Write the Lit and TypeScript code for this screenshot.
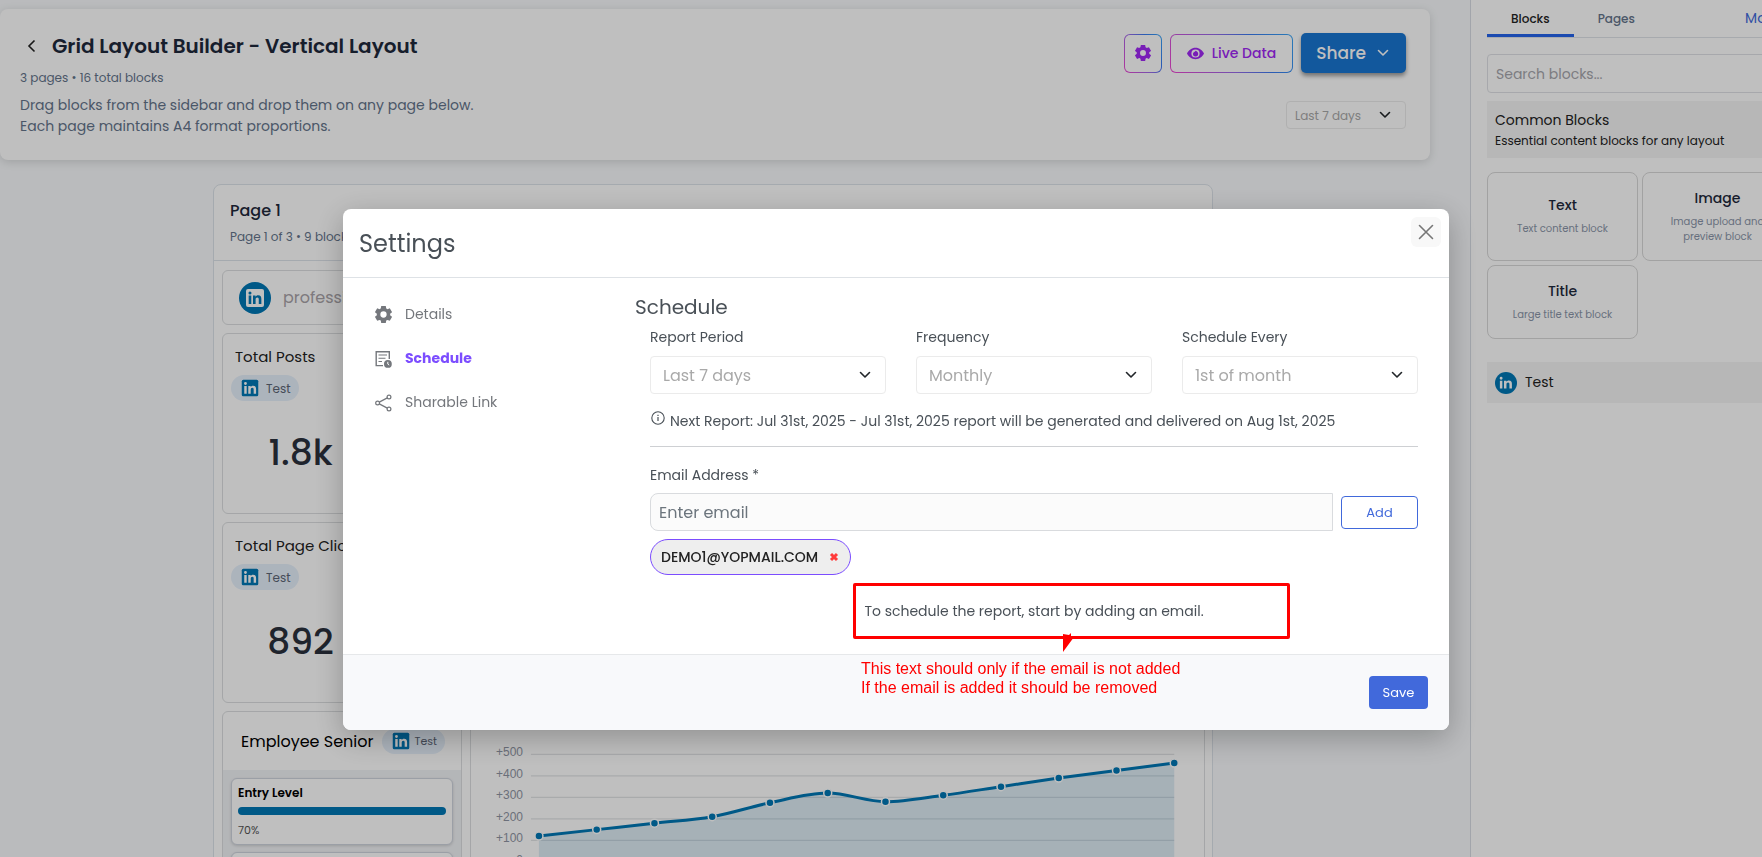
import { LitElement, html, css, svg } from "lit";
import { customElement } from "lit/decorators.js";

const chevron = (size = 16) => html`<svg class="chev" width=${size} height=${size} viewBox="0 0 16 16" aria-hidden="true"><path d="M3.5 5.5 8 10l4.5-4.5" fill="none" stroke="currentColor" stroke-width="1.6" stroke-linecap="round" stroke-linejoin="round"/></svg>`;

const gear = (size: number) => html`<svg width=${size} height=${size} viewBox="2 2 20 20" fill="currentColor" aria-hidden="true"><path fill-rule="evenodd" d="M9.3 2h5.4l.5 2.9c.5.2 1 .5 1.5.8l2.7-1 2.7 4.6-2.3 1.9a7 7 0 0 1 0 1.7l2.3 1.9-2.7 4.6-2.7-1c-.5.3-1 .6-1.5.8L14.7 22H9.3l-.5-2.8c-.5-.2-1-.5-1.5-.8l-2.7 1-2.7-4.6 2.3-1.9a7 7 0 0 1 0-1.7L1.9 9.3l2.7-4.6 2.7 1c.5-.3 1-.6 1.5-.8zM12 8.3a3.7 3.7 0 1 0 0 7.4 3.7 3.7 0 0 0 0-7.4z"/></svg>`;

const IN_GLYPH = "M5.3 9.3h2.9v9.3H5.3zM6.75 4.7a1.7 1.7 0 1 1 0 3.4 1.7 1.7 0 0 1 0-3.4zM10.1 9.3h2.8v1.3c.5-.9 1.5-1.6 3-1.6 2.7 0 3.5 1.7 3.5 4.2v5.4h-2.9v-4.9c0-1.3-.3-2.2-1.6-2.2s-1.9 1-1.9 2.3v4.8h-2.9z";
const linkedSquare = html`<svg width="18" height="18" viewBox="0 0 24 24" aria-hidden="true"><rect x="1" y="1" width="22" height="22" rx="2" fill="#0077b5"/><path d=${IN_GLYPH} transform="translate(-1.6 -1.2) scale(1.12)" fill="#fff"/></svg>`;
const linkedRound = html`<svg width="22" height="22" viewBox="0 0 24 24" aria-hidden="true"><circle cx="12" cy="12" r="12" fill="#0077b5"/><path d=${IN_GLYPH} transform="translate(.4 .8) scale(.93)" fill="#fff"/></svg>`;
const linkedLarge = html`<svg width="32" height="32" viewBox="0 0 32 32" aria-hidden="true"><circle cx="16" cy="16" r="16" fill="#0077b5"/><rect x="7" y="7" width="18" height="18" rx="2" fill="#fff"/><path d=${IN_GLYPH} transform="translate(4.9 5.2) scale(.9)" fill="#0077b5"/></svg>`;

const badge = html`<span class="badge">${linkedSquare}<span>Test</span></span>`;

const FOLLOWERS = [120, 150, 180, 210, 275, 320, 280, 310, 350, 390, 425, 460];

@customElement("growth-chart")
class GrowthChart extends LitElement {
  static styles = css`
    :host { display: block; }
    svg { display: block; width: 100%; }
    text { font: 12px "Liberation Sans", Arial, sans-serif; fill: #8f95a3; text-anchor: end; }
  `;
  render() {
    const left = 68;
    const right = 704;
    const y = (v: number) => 150 - v * 0.215;
    const pts = FOLLOWERS.map((v, i) => [left + (i * (right - left)) / (FOLLOWERS.length - 1), y(v)]);
    const slope = (i: number) => {
      const a = pts[i][1] - pts[i - 1][1];
      const b = pts[i + 1][1] - pts[i][1];
      return a * b <= 0 ? 0 : (a + b) / (pts[i + 1][0] - pts[i - 1][0]);
    };
    let line = `M${pts[0][0]} ${pts[0][1]}`;
    for (let i = 1; i < pts.length; i++) {
      const [x0, y0] = pts[i - 1];
      const [x1, y1] = pts[i];
      const d = (x1 - x0) / 3;
      const s0 = i === 1 ? (y1 - y0) / (x1 - x0) : slope(i - 1);
      const s1 = i === pts.length - 1 ? (y1 - y0) / (x1 - x0) : slope(i);
      line += `C${x0 + d} ${y0 + d * s0} ${x1 - d} ${y1 - d * s1} ${x1} ${y1}`;
    }
    return html`<svg viewBox="0 0 734 190" role="img" aria-label="Followers over time">
      ${[500, 400, 300, 200, 100, 0].map((v) => svg`
        <line x1="60" x2="704" y1=${y(v)} y2=${y(v)} stroke="#e2e4e6" stroke-width="1.2"/>
        <text x="52" y=${y(v) + 2}>${v ? "+" + v : "0"}</text>`)}
      <path d="${line}L${right} ${y(0)}L${left} ${y(0)}Z" fill="#0077b5" fill-opacity=".13"/>
      <path d=${line} fill="none" stroke="#0077b5" stroke-width="3"/>
      ${pts.map(([cx, cy]) => svg`<circle cx=${cx} cy=${cy} r="4" fill="#0077b5" stroke="#fff" stroke-width="1.5"/>`)}
    </svg>`;
  }
}

@customElement("app-root")
class AppRoot extends LitElement {
  static styles = css`
    :host { display: block; font-family: Poppins, Inter, sans-serif; color: #1e293b; font-size: 14px; line-height: 21px; }
    * { box-sizing: border-box; }
    h1, h2, h3, p { margin: 0; font-weight: 400; font-size: inherit; }
    button, input, select { font: inherit; color: inherit; margin: 0; }
    button { background: none; border: 0; padding: 0; cursor: pointer; }
    svg { display: block; flex: none; }
    a { text-decoration: none; color: inherit; }

    .shell { display: flex; height: 100vh; overflow: hidden; background: #f8fafc; }
    main { flex: 1; min-width: 0; padding: 9px 40px 0 0; }
    .hero { display: flex; justify-content: space-between; background: #fff; border-radius: 8px; padding: 24px 24px 23px 20px; box-shadow: 0 2px 10px rgba(0, 0, 0, .14); }
    .title { display: flex; align-items: center; gap: 14px; padding-left: 4px; }
    .title h1 { font-size: 20px; line-height: 26px; font-weight: 600; }
    .back { color: #222; }
    .counts { font-size: 12px; line-height: 18px; color: #64748b; margin: 10px 0 8px; }
    .intro { color: #64748b; }
    .tools { display: flex; flex-direction: column; align-items: flex-end; gap: 28px; }
    .row { display: flex; align-items: center; gap: 8px; }
    .ring { display: flex; align-items: center; justify-content: center; gap: 8px; height: 39px; border: 1px solid transparent; border-radius: 6px; color: #a028f5; font-weight: 500;
      background: linear-gradient(#fff, #fff) padding-box, linear-gradient(60deg, #f046d2, #9b6bea 45%, #3a7bf0 70%, #38a5f5) border-box; }
    .gearbtn { width: 38px; }
    .live { padding: 0 16px; }
    .share { display: flex; align-items: center; gap: 9px; height: 40px; padding: 0 15px; background: #1976d2; color: #fff; border-radius: 5px; font-size: 17px; font-weight: 500; box-shadow: 0 3px 4px rgba(0, 0, 0, .4); }

    .pick { display: grid; align-items: center; }
    .pick select, .pick svg { grid-area: 1 / 1; }
    .pick svg { justify-self: end; margin-right: 13px; pointer-events: none; color: #212529; }
    .pick select { appearance: none; width: 100%; height: 38px; border: 1px solid #ebebeb; border-radius: 4px; background: #fff; color: #a9a9a9; font-size: 16px; padding: 0 12px; outline: 0; }
    .pick.small { width: 120px; }
    .pick.small select { height: 28px; font-size: 12px; padding: 0 8px; }

    .desk { padding-right: 4px; }
    .paper { max-width: 1000px; margin: 24px auto 0; border: 1px solid #dde3ea; border-radius: 8px; background: #fff; }
    .paperhead { padding: 14px 16px; border-bottom: 1px solid #dde3ea; }
    .paperhead h2 { font-size: 16px; line-height: 24px; font-weight: 500; }
    .paperhead p { font-size: 12px; line-height: 18px; color: #64748b; margin-top: 5px; }
    .blocks { display: grid; grid-template-columns: repeat(12, minmax(0, 1fr)); gap: 8px; padding: 9px 7px 8px 8px; }
    .card { border: 1px solid #dcdee0; border-radius: 6px; background: #fff; overflow: hidden; }
    .full { grid-column: span 12; display: flex; align-items: center; gap: 12px; height: 55px; padding: 0 16px; font-size: 16px; color: #a8a3a8; }
    .metric { grid-column: 1 / span 2; height: 181px; padding: 12px 8px; white-space: nowrap; }
    .metric h3 { padding-left: 4px; font-size: 15px; line-height: 22px; color: #222; }
    .badge { display: inline-flex; align-items: center; gap: 7px; height: 26px; padding: 0 8px 0 10px; border-radius: 13px; background: #e6f0fb; font-size: 12px; color: #5c6676; }
    .metric .badge { margin-top: 7px; }
    .metric strong { display: block; text-align: center; font-size: 36px; line-height: 54px; font-weight: 500; margin-top: 23px; color: #2a303c; }
    .levels { grid-column: 1 / span 3; height: 220px; }
    .levelhead { display: flex; align-items: center; justify-content: space-between; gap: 8px; height: 58px; padding: 0 16px 0 18px; font-size: 16px; color: #000; white-space: nowrap; }
    .levelhead .badge { font-size: 11px; height: 25px; gap: 5px; }
    .levellist { display: flex; flex-direction: column; gap: 7px; padding: 8px; background: #f1f3f6; }
    .level { height: 67px; padding: 6px; border: 1px solid #cfd4de; border-radius: 6px; background: #fff; box-shadow: 0 1px 3px rgba(0, 0, 0, .15); }
    .level b { display: block; font-size: 12px; line-height: 16px; font-weight: 600; color: #000; }
    .track { height: 8px; margin: 6px 0 7px; border-radius: 4px; background: #0077b5; }
    .level small { display: block; font-size: 11px; line-height: 16px; color: #555; }
    .growth { grid-column: span 9; height: 220px; }

    aside { flex: 0 0 292px; border-left: 1px solid #d8dde5; background: #fff; overflow: hidden; }
    .side { width: 338px; padding: 0 17px 0 16px; }
    .tabs { display: flex; height: 38px; border-bottom: 1px solid #dfe3e9; font-size: 12px; font-weight: 500; color: #64748b; }
    .tabs button { padding: 3px 24px 0; border-bottom: 3px solid transparent; }
    .tabs .on { color: #222; border-color: #2563eb; }
    .tabs .more { margin-left: auto; padding: 3px 12px 0 0; font-size: 14px; color: #4169db; font-weight: 400; }
    .search { display: block; width: 100%; height: 39px; margin: 16px 0 8px; border: 1px solid #dfe1e6; border-radius: 4px; padding: 2px 8px 0; background: #fff; outline: 0; }
    .search::placeholder { color: #a6a6ac; opacity: 1; }
    .group { background: #f4f4f4; padding: 9px 8px 7px; color: #222; height: 57px; }
    .group p { font-size: 12px; line-height: 20px; }
    .tiles { display: grid; grid-template-columns: 151px 151px; gap: 4px; margin: 14px 0 23px; }
    .tile { display: flex; flex-direction: column; align-items: center; justify-content: center; gap: 5px; min-height: 74px; padding: 9px 20px 11px; border: 1px solid #d8d8d8; border-radius: 8px; background: #fff; font-weight: 500; text-align: center; }
    .tile small { font-size: 10px; line-height: 15px; font-weight: 400; color: #8a95a8; }
    .tile.tall { min-height: 89px; }
    .source { display: flex; align-items: center; gap: 8px; height: 41px; padding: 0 8px; background: #f4f4f4; color: #222; }

    .veil { position: fixed; inset: 0; display: flex; justify-content: center; align-items: flex-start; padding: 209px 0 0 30px; background: rgba(0, 0, 0, .25); }
    .modal { width: 1106px; max-width: 96vw; background: #fff; border-radius: 8px; overflow: hidden; color: #495057; box-shadow: 0 8px 30px rgba(0, 0, 0, .25); }
    .modalhead { display: flex; justify-content: space-between; height: 69px; padding: 8px 8px 0 16px; border-bottom: 1px solid #dee2e6; }
    .modalhead h2 { font-size: 24px; line-height: 54px; }
    .close { display: grid; place-items: center; width: 30px; height: 30px; border-radius: 6px; background: #f8f8f8; color: #777; }
    .modalbody { display: grid; grid-template-columns: 292px minmax(0, 1fr); padding: 14px 31px 0 0; }
    nav { display: flex; flex-direction: column; gap: 23px; padding: 12px 0 0 32px; }
    nav a { display: flex; align-items: center; gap: 13px; color: #74777c; }
    nav a.on span { color: #7c4dff; font-weight: 700; }
    .pane h3 { font-size: 20px; line-height: 30px; }
    .form { padding-left: 15px; }
    .picks { display: grid; grid-template-columns: repeat(3, 1fr); gap: 30px; }
    label { display: block; }
    .picks label { margin: 5px 0 8px; }
    .next { display: flex; gap: 4px; height: 53px; padding-top: 17px; border-bottom: 1px solid #ced0d3; }
    .email { margin: 18px 0 7px; }
    .entry input { flex: 1; min-width: 0; height: 38px; border: 1px solid #d9dbde; border-radius: 8px 0 0 8px; background: #fbfbfb; padding: 0 8px; font-size: 16px; outline: 0; }
    .entry input::placeholder { color: #6c757d; opacity: 1; }
    .add { width: 77px; height: 33px; border: 1px solid #4169db; border-radius: 4px; color: #4169db; font-size: 13px; }
    .chip { display: inline-flex; align-items: center; gap: 11px; height: 36px; margin-top: 8px; padding: 0 11px 0 10px; border: 1px solid #7c4dff; border-radius: 18px; background: #eee; color: #222; font-weight: 500; }
    .chip button { color: #ff3b3b; display: grid; }
    .hint { padding: 26px 0 32px; text-align: center; }
    .modalfoot { display: flex; justify-content: flex-end; align-items: flex-start; height: 76px; padding: 21px; border-top: 1px solid #e6e8ea; background: #f8f9fb; }
    .save { width: 59px; height: 33px; border-radius: 4px; background: #4169db; color: #fff; font-size: 13px; }

    .note { position: absolute; left: 853px; top: 583px; width: 437px; color: #f00; font: 16px/19px "Liberation Sans", Arial, sans-serif; }
    .frame { height: 56px; border: 3px solid #f00; border-radius: 2px; }
    .tail { margin: -6px 0 0 210px; }
    .note p { padding: 7px 0 0 8px; white-space: nowrap; }
  `;

  pick(id: string, value: string, small = false) {
    return html`<div class="pick ${small ? "small" : ""}"><select id=${id} aria-label=${id}><option>${value}</option></select>${chevron()}</div>`;
  }

  render() {
    return html`
      <div class="shell">
        <main>
          <section class="hero">
            <div>
              <div class="title">
                <button class="back" aria-label="Back"><svg width="14" height="16" viewBox="0 0 14 16"><path d="M10.5 2.5 5 8l5.5 5.5" fill="none" stroke="currentColor" stroke-width="1.6"/></svg></button>
                <h1>Grid Layout Builder - Vertical Layout</h1>
              </div>
              <p class="counts">3 pages • 16 total blocks</p>
              <p class="intro">Drag blocks from the sidebar and drop them on any page below.<br />Each page maintains A4 format proportions.</p>
            </div>
            <div class="tools">
              <div class="row">
                <button class="ring gearbtn" aria-label="Settings">${gear(16)}</button>
                <button class="ring live">
                  <svg width="17" height="17" viewBox="0 0 24 24" fill="currentColor"><path fill-rule="evenodd" d="M12 4C6.5 4 2.3 7.5 0 12c2.3 4.5 6.5 8 12 8s9.7-3.5 12-8c-2.3-4.5-6.5-8-12-8zm0 2.2a5.8 5.8 0 1 1 0 11.6 5.8 5.8 0 0 1 0-11.6z"/><path d="M12 8.2c-.2 1.7-3.6 1.6-3.6 4.3a3.7 3.7 0 0 0 7.4 0c0-1.8-1.3-3.9-3.8-4.3z"/></svg>
                  Live Data
                </button>
                <button class="share">Share ${chevron(16)}</button>
              </div>
              ${this.pick("range", "Last 7 days", true)}
            </div>
          </section>
          <div class="desk">
            <section class="paper">
              <header class="paperhead"><h2>Page 1</h2><p>Page 1 of 3 • 9 blocks</p></header>
              <div class="blocks">
                <div class="card full">${linkedLarge}<span>professional</span></div>
                <div class="card metric"><h3>Total Posts</h3>${badge}<strong>1.8k</strong></div>
                <div class="card metric"><h3>Total Page Clicks</h3>${badge}<strong>892</strong></div>
                <div class="card levels">
                  <div class="levelhead"><span>Employee Senior</span>${badge}</div>
                  <div class="levellist">
                    <div class="level"><b>Entry Level</b><div class="track"></div><small>70%</small></div>
                    <div class="level"></div>
                  </div>
                </div>
                <div class="card growth"><growth-chart></growth-chart></div>
              </div>
            </section>
          </div>
        </main>
        <aside>
          <div class="side">
            <div class="tabs"><button class="on">Blocks</button><button>Pages</button><button class="more">More</button></div>
            <input class="search" type="search" placeholder="Search blocks..." aria-label="Search blocks" />
            <div class="group"><h3>Common Blocks</h3><p>Essential content blocks for any layout</p></div>
            <div class="tiles">
              <button class="tile tall">Text<small>Text content block</small></button>
              <button class="tile tall">Image<small>Image upload and preview block</small></button>
              <button class="tile">Title<small>Large title text block</small></button>
            </div>
            <div class="source">${linkedRound}<span>Test</span></div>
          </div>
        </aside>
      </div>

      <div class="veil">
        <div class="modal" role="dialog" aria-labelledby="settings-title">
          <header class="modalhead">
            <h2 id="settings-title">Settings</h2>
            <button class="close" aria-label="Close"><svg width="16" height="16" viewBox="0 0 16 16"><path d="M1.5 1.5l13 13M14.5 1.5l-13 13" stroke="currentColor" stroke-width="1.6" stroke-linecap="round"/></svg></button>
          </header>
          <div class="modalbody">
            <nav>
              <a href="#details">${gear(17)}<span>Details</span></a>
              <a class="on" href="#schedule"><svg width="17" height="18" viewBox="0 0 17 18" fill="none" stroke="currentColor" stroke-width="1.4"><path d="M8 15.6H1.2V1.7h13.1V9"/><path d="M3.5 5H12M3.5 8.3h7M3.5 11.5H7" stroke-width="1.1"/><circle cx="12.9" cy="13.9" r="3.9" fill="currentColor" stroke="none"/><path d="M12.8 11.8v2.3l1.4 1" stroke="#fff" stroke-width="1"/></svg><span>Schedule</span></a>
              <a href="#link"><svg width="17" height="18" viewBox="0 0 17 18" fill="none" stroke="currentColor" stroke-width="1.2"><circle cx="2.6" cy="9" r="1.9"/><circle cx="14" cy="3" r="1.9"/><circle cx="14" cy="15" r="1.9"/><path d="M4.3 8.1l8-4.2M4.3 9.9l8 4.2"/></svg><span>Sharable Link</span></a>
            </nav>
            <section class="pane">
              <h3>Schedule</h3>
              <div class="form">
                <div class="picks">
                  <div><label for="period">Report Period</label>${this.pick("period", "Last 7 days")}</div>
                  <div><label for="frequency">Frequency</label>${this.pick("frequency", "Monthly")}</div>
                  <div><label for="every">Schedule Every</label>${this.pick("every", "1st of month")}</div>
                </div>
                <div class="next">
                  <svg width="16" height="16" viewBox="0 0 16 16"><circle cx="8" cy="7" r="6.2" fill="none" stroke="currentColor" stroke-width="1.1"/><path d="M8 6.1v4M8 3.8v1.2" stroke="currentColor" stroke-width="1.2"/></svg>
                  <p>Next Report: Jul 31st, 2025 - Jul 31st, 2025 report will be generated and delivered on Aug 1st, 2025</p>
                </div>
                <label class="email" for="email">Email Address *</label>
                <div class="row entry"><input id="email" type="email" placeholder="Enter email" /><button class="add">Add</button></div>
                <div class="chip"><span>DEMO1@YOPMAIL.COM</span><button aria-label="Remove email"><svg width="10" height="10" viewBox="0 0 10 10"><path d="M2 2l6 6M8 2L2 8" stroke="currentColor" stroke-width="3"/></svg></button></div>
                <p class="hint">To schedule the report, start by adding an email.</p>
              </div>
            </section>
          </div>
          <footer class="modalfoot"><button class="save">Save</button></footer>
        </div>
        <div class="note">
          <div class="frame"></div>
          <svg class="tail" width="12" height="19" viewBox="0 0 12 19"><path d="M0 1l6 1 2-2v4h3L0 19z" fill="#f00"/></svg>
          <p>This text should only if the email is not added<br />If the email is added it should be removed</p>
        </div>
      </div>
    `;
  }
}
